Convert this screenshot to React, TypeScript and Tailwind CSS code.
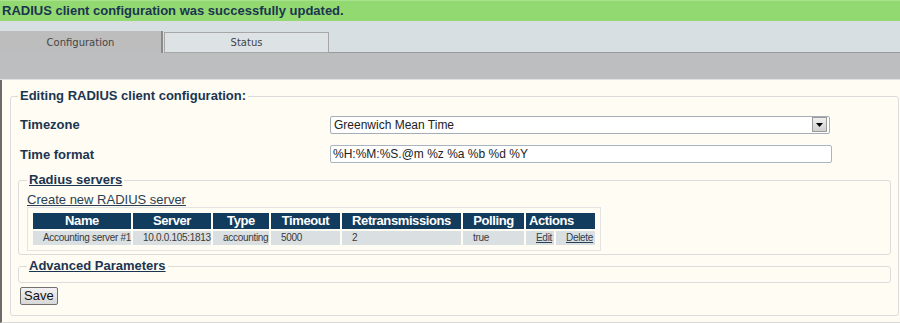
import React from 'react';

const navy = 'text-[#1b3550]';

function Legend({ children, link }: { children: React.ReactNode; link?: boolean }) {
  return (
    <legend className={`px-[2px] text-[13px] leading-[16px] font-bold ${navy} ${link ? 'underline' : ''}`}>
      {children}
    </legend>
  );
}

const headers = ['Name', 'Server', 'Type', 'Timeout', 'Retransmissions', 'Polling'];
const colWidths = [98, 78, 56, 69, 119, 61, 28, 39];

const servers = [
  { name: 'Accounting server #1', server: '10.0.0.105:1813', type: 'accounting', timeout: '5000', retrans: '2', polling: 'true' },
];

export default function App() {
  return (
    <div className="w-[900px] h-[323px] overflow-hidden bg-[#fffcf3] font-['Liberation_Sans',Arial,sans-serif]">
      {/* status message */}
      <div className="h-[21px] bg-[#92d971] border-t border-[#a8e28c] px-[2px] text-[13px] leading-[19px] font-bold text-[#1b3550]">
        RADIUS client configuration was successfully updated.
      </div>

      {/* tabs */}
      <div className="h-[32px] bg-[#d8dfe2] flex items-end font-['DejaVu_Sans',Verdana,sans-serif] text-[10px] text-[#444]">
        <div className="w-[163px] h-[22px] bg-[#bdbdbe] border-r-2 border-[#8a8a8a] flex items-center justify-center">
          Configuration
        </div>
        <div className="ml-[1px] w-[165px] h-[21px] bg-[#dde2e5] border border-[#a6a6a6] flex items-center justify-center">
          Status
        </div>
        <div className="flex-1 self-stretch border-b border-[#9a9a9a]" />
      </div>
      <div className="h-[27px] bg-[#bdbebf] border-b border-[#e2e2e2]" />

      {/* content */}
      <div className="h-[243px] border-l-2 border-[#6b6b6b] pt-[8px] pb-[8px] border-b border-b-[#d8d8d8]">
        <fieldset className="ml-[8px] w-[889px] border border-[#dcdcdc] rounded-[3px] px-[7px] pb-[8px]">
          <Legend>Editing RADIUS client configuration:</Legend>

          <div className="mt-[11px] grid grid-cols-[312px_1fr] gap-y-[10px] items-center">
            <div className={`pl-[2px] text-[13px] font-bold ${navy}`}>Timezone</div>
            <div className="w-[500px] h-[18px] bg-white border border-[#a5aeb6] rounded-[2px] flex items-center justify-between pl-[3px] pr-[2px] text-[12px] text-[#222]">
              <span>Greenwich Mean Time</span>
              <span className="w-[15px] h-[15px] bg-gradient-to-b from-[#f0f0f0] to-[#cfcfcf] border border-[#9a9a9a] flex items-center justify-center">
                <svg width="7" height="4" viewBox="0 0 7 4">
                  <path d="M0 0h7L3.5 4z" fill="#000" />
                </svg>
              </span>
            </div>

            <div className={`pl-[2px] text-[13px] font-bold ${navy}`}>Time format</div>
            <div className="w-[502px] h-[18px] bg-white border border-[#a9b4c0] rounded-[2px] flex items-center pl-[2px] text-[12px] text-[#222]">
              %H:%M:%S.@m %z %a %b %d %Y
            </div>
          </div>

          {/* radius servers */}
          <fieldset className="mt-[8px] border border-[#dcdcdc] rounded-[3px] px-[8px] pb-[3px]">
            <Legend link>Radius servers</Legend>
            <a href="#" className="mt-[4px] block text-[13px] leading-[15px] text-[#2b3f55] underline">
              Create new RADIUS server
            </a>
            <div className="w-fit border border-[#e4e4e4] p-[3px]">
              <table className="table-fixed w-[566px] border-separate border-spacing-[2px]">
                <colgroup>
                  {colWidths.map((w, i) => (
                    <col key={i} style={{ width: w }} />
                  ))}
                </colgroup>
                <thead>
                  <tr>
                    {headers.map((h) => (
                      <th key={h} className="h-[16px] p-0 bg-[#123c5e] text-white text-[13px] leading-[16px] font-bold text-center tracking-[-0.4px] whitespace-nowrap overflow-hidden">
                        {h}
                      </th>
                    ))}
                    <th colSpan={2} className="h-[16px] p-0 pl-[3px] bg-[#123c5e] text-white text-[13px] leading-[16px] font-bold text-left tracking-[-0.4px]">
                      Actions
                    </th>
                  </tr>
                </thead>
                <tbody>
                  {servers.map((s) => (
                    <tr key={s.name} className="text-[#3a3a3a] text-[10px]">
                      {[s.name, s.server, s.type, s.timeout, s.retrans, s.polling].map((v, i) => (
                        <td key={i} className="h-[14px] p-0 pl-[10px] leading-[14px] bg-[#dadfe2] whitespace-nowrap tracking-[-0.3px]">
                          {v}
                        </td>
                      ))}
                      <td className="h-[14px] p-0 pl-[10px] leading-[14px] bg-[#dadfe2] tracking-[-0.3px]">
                        <a href="#" className="underline text-[#2b3f55]">Edit</a>
                      </td>
                      <td className="h-[14px] p-0 pl-[10px] leading-[14px] bg-[#dadfe2] tracking-[-0.3px]">
                        <a href="#" className="underline text-[#2b3f55]">Delete</a>
                      </td>
                    </tr>
                  ))}
                </tbody>
              </table>
            </div>
          </fieldset>

          {/* advanced */}
          <fieldset className="mt-[3px] h-[25px] border border-[#dcdcdc] rounded-[3px] px-[8px]">
            <Legend link>Advanced Parameters</Legend>
          </fieldset>

          <button className="mt-[4px] ml-[2px] h-[18px] px-[3px] border border-[#707070] rounded-[2px] bg-gradient-to-b from-[#f2f2f2] to-[#d8d8d8] text-[13px] leading-[16px] text-[#111]">
            Save
          </button>
        </fieldset>
      </div>
    </div>
  );
}
